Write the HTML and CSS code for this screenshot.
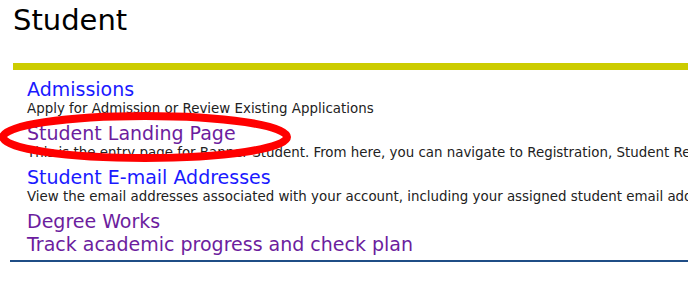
FILE: index.html
```html
<!DOCTYPE html>
<html>
<head>
  <title>Student</title>
  <link rel="stylesheet" href="styles.css">
</head>
<body>
  <h1 class="page-title">Student</h1>

  <div class="menu">
    <div class="menu-bar"></div>
    <ul class="menu-list">
      <li class="menu-item">
        <a href="#" class="menu-link">Admissions</a>
        <div class="menu-desc">Apply for Admission or Review Existing Applications</div>
      </li>
      <li class="menu-item">
        <a href="#" class="menu-link visited">Student Landing Page</a>
        <div class="menu-desc">This is the entry page for Banner Student. From here, you can navigate to Registration, Student Records and more.</div>
      </li>
      <li class="menu-item">
        <a href="#" class="menu-link">Student E-mail Addresses</a>
        <div class="menu-desc">View the email addresses associated with your account, including your assigned student email address.</div>
      </li>
      <li class="menu-item last">
        <a href="#" class="menu-link visited">Degree Works</a>
        <a href="#" class="menu-link visited">Track academic progress and check plan</a>
      </li>
    </ul>
  </div>

  <!-- marca roja sobre el enlace -->
  <svg class="highlight" width="300" height="60" viewBox="0 0 300 60">
    <ellipse cx="145" cy="26" rx="142" ry="21" fill="none" stroke="#ff0000" stroke-width="8"/>
  </svg>
</body>
</html>
```

FILE: styles.css
```css
body {
  font-family: "DejaVu Sans", Verdana, sans-serif;
  margin: 0;
  padding: 0;
  background-color: #fff;
  position: relative;
}

.page-title {
  font-size: 29px;
  font-weight: normal;
  color: #000;
  margin: 0;
  padding: 3px 0 0 13px;
  height: 60px;
  line-height: 34px;
}

.menu {
  width: 678px;
  margin-left: 10px;
  overflow: hidden;
  border-bottom: 2px solid #1f4d86;
}

.menu-bar {
  height: 7px;
  margin-left: 3px;
  background-color: #cccc00;
  margin-bottom: 8px;
}

.menu-list {
  list-style: none;
  margin: 0;
  padding: 0 0 0 17px;
}

.menu-item {
  margin-bottom: 5px;
  white-space: nowrap;
}

.menu-item.last {
  margin-bottom: 4px;
}

.menu-link {
  display: block;
  font-size: 19px;
  line-height: 23px;
  color: #1a1aff;
  text-decoration: none;
}

.menu-link.visited {
  color: #6c1d9e;
}

.menu-desc {
  font-size: 13.4px;
  line-height: 16px;
  color: #222;
}

.highlight {
  position: absolute;
  left: 0;
  top: 111px;
}
```
